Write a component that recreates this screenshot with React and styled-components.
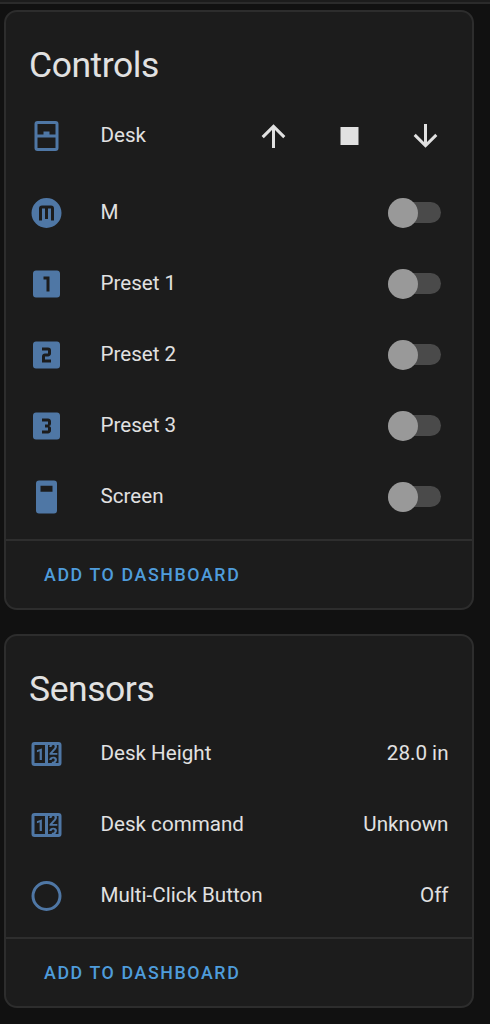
import React from 'react'
import styled, {createGlobalStyle, css} from 'styled-components'

const GlobalStyle = createGlobalStyle`
  * { box-sizing: border-box; }

  body {
    background-color: #111111;
    color: #e1e1e1;
    font-family: Roboto, sans-serif;
    margin: 0;
  }
`

const icons = {
  window: 'M6,11H10V9H14V11H18V4H6V11M18,13H6V20H18V13M6,22A2,2 0 0,1 4,20V4A2,2 0 0,1 6,2H18A2,2 0 0,1 20,4V20A2,2 0 0,1 18,22H6Z',
  circleM: 'M9,7A2,2 0 0,0 7,9V17H9V9H11V16H13V9H15V17H17V9A2,2 0 0,0 15,7H9M12,2A10,10 0 0,1 22,12A10,10 0 0,1 12,22A10,10 0 0,1 2,12A10,10 0 0,1 12,2Z',
  one: 'M14,17H12V9H10V7H14M19,3H5C3.89,3 3,3.89 3,5V19A2,2 0 0,0 5,21H19A2,2 0 0,0 21,19V5C21,3.89 20.1,3 19,3Z',
  two: 'M15,11C15,12.11 14.1,13 13,13H11V15H15V17H9V13C9,11.89 9.9,11 11,11H13V9H9V7H13A2,2 0 0,1 15,9M19,3H5C3.89,3 3,3.89 3,5V19A2,2 0 0,0 5,21H19A2,2 0 0,0 21,19V5C21,3.89 20.1,3 19,3Z',
  three: 'M15,10.5A1.5,1.5 0 0,1 13.5,12C14.34,12 15,12.67 15,13.5V15C15,16.11 14.11,17 13,17H9V15H13V13H11V11H13V9H9V7H13C14.11,7 15,7.89 15,9M19,3H5C3.89,3 3,3.89 3,5V19A2,2 0 0,0 5,21H19A2,2 0 0,0 21,19V5C21,3.89 20.1,3 19,3Z',
  screen: 'M7,1H17A2,2 0 0,1 19,3V21A2,2 0 0,1 17,23H7A2,2 0 0,1 5,21V3A2,2 0 0,1 7,1M8,4.5V8.5H16V4.5H8Z',
  counter: 'M4,4H20A2,2 0 0,1 22,6V18A2,2 0 0,1 20,20H4A2,2 0 0,1 2,18V6A2,2 0 0,1 4,4M4,6V18H11V6H4M20,18V6H18.76C19,6.54 18.95,7.07 18.95,7.13C18.88,7.8 18.41,8.5 18.24,8.75L15.91,11.3L19.23,11.28L19.24,12.5L14.04,12.47L14,11.47C14,11.47 17.05,8.24 17.2,7.95C17.34,7.67 17.91,6 16.5,6C15.27,6.05 15.41,7.3 15.41,7.3L13.87,7.31C13.87,7.31 13.88,6.65 14.25,6H13V18H15.58L15.57,17.14L16.54,17.13C16.54,17.13 17.45,16.97 17.46,16.08C17.5,15.08 16.65,15.08 16.5,15.08C16.37,15.08 15.43,15.13 15.43,15.95H13.91C13.91,15.95 13.95,13.89 16.5,13.89C19.1,13.89 18.96,15.91 18.96,15.91C18.96,15.91 19,17.16 17.85,17.63L18.37,18H20M8.92,16H7.42V10.2L5.62,10.76V9.53L8.76,8.41H8.92V16Z',
  circle: 'M12,20A8,8 0 0,1 4,12A8,8 0 0,1 12,4A8,8 0 0,1 20,12A8,8 0 0,1 12,20M12,2A10,10 0 0,0 2,12A10,10 0 0,0 12,22A10,10 0 0,0 22,12A10,10 0 0,0 12,2Z',
  up: 'M13,20H11V8L5.5,13.5L4.08,12.08L12,4.16L19.92,12.08L18.5,13.5L13,8V20Z',
  stop: 'M18,18H6V6H18V18Z',
  down: 'M11,4H13V16L18.5,10.5L19.92,11.92L12,19.84L4.08,11.92L5.5,10.5L11,16V4Z'
}

const Svg = styled.svg`
  display: block;
  fill: currentColor;
  flex: none;
  height: 36px;
  width: 37px;
`

const Icon = ({k}) => (
  <Svg viewBox='0 0 24 24'>
    <path fillRule='evenodd' d={icons[k]} />
  </Svg>
)

const Toolbar = styled.div`
  background-color: #1c1c1c;
  border-bottom: 2px solid #2b2b2b;
  height: 4px;
`

const Page = styled.main`
  display: flex;
  flex-direction: column;
  gap: 24px;
  height: 1020px;
  padding: 6px 16px 0 4px;
`

const Card = styled.section`
  background-color: #1c1c1c;
  border: 2px solid #2d2d2d;
  border-radius: 13px;
  display: flex;
  flex-direction: column;
`

const CardTitle = styled.h1`
  font-size: 35.5px;
  font-weight: 400;
  height: ${props => props.$height}px;
  letter-spacing: -0.45px;
  line-height: 46px;
  margin: 0;
  padding: 30px 23px 0;
`

const Row = styled.div`
  align-items: center;
  display: flex;
  height: 71px;
  padding: 0 23.5px 0 22px;

  ${props => props.$tall ? css`
    height: 81px;
    padding-bottom: 2px;
  ` : ''}
`

const RowIcon = styled.div`
  color: #4f77a5;
  margin-right: 35.5px;
`

const Label = styled.div`
  flex: 1;
  font-size: 20.6px;
  line-height: 30px;
  padding-bottom: 2px;
`

const Value = styled(Label)`
  flex: none;
`

const CoverButtons = styled.div`
  display: flex;
  gap: 39.25px;
  padding-right: 4.5px;
`

const CoverButton = styled.button`
  background: none;
  border: 0;
  color: inherit;
  padding: 0;
`

const SwitchTrack = styled.div`
  align-items: center;
  background-color: #4a4a4a;
  border-radius: 11px;
  display: flex;
  height: 21px;
  margin-right: 7.5px;
  width: 53px;
`

const SwitchThumb = styled.div`
  background-color: #999999;
  border-radius: 50%;
  height: 30px;
  width: 30px;
`

const CardActions = styled.div`
  align-items: center;
  border-top: 2px solid #2e2e2e;
  display: flex;
  height: 69px;
  margin-top: ${props => props.$gap}px;
  padding-left: 38px;
`

const ActionButton = styled.button`
  background: none;
  border: 0;
  color: #4f9cdb;
  font-family: inherit;
  font-size: 17.8px;
  font-weight: 500;
  letter-spacing: 1.6px;
  padding: 0;
  text-transform: uppercase;
`

const switches = [
  {icon: 'circleM', name: 'M'},
  {icon: 'one', name: 'Preset 1'},
  {icon: 'two', name: 'Preset 2'},
  {icon: 'three', name: 'Preset 3'},
  {icon: 'screen', name: 'Screen'}
]

const sensors = [
  {icon: 'counter', name: 'Desk Height', value: '28.0 in'},
  {icon: 'counter', name: 'Desk command', value: 'Unknown'},
  {icon: 'circle', name: 'Multi-Click Button', value: 'Off'}
]

const EntityRow = ({children, icon, name, tall}) => (
  <Row $tall={tall}>
    <RowIcon><Icon k={icon} /></RowIcon>
    <Label>{name}</Label>
    {children}
  </Row>
)

const EntityCard = ({children, gap, title, titleHeight}) => (
  <Card>
    <CardTitle $height={titleHeight}>{title}</CardTitle>
    {children}
    <CardActions $gap={gap}>
      <ActionButton>Add to dashboard</ActionButton>
    </CardActions>
  </Card>
)

export default function App () {
  return (
    <>
      <GlobalStyle />
      <Toolbar />
      <Page>
        <EntityCard gap={7} title='Controls' titleHeight={84}>
          <EntityRow icon='window' name='Desk' tall>
            <CoverButtons>
              {['up', 'stop', 'down'].map(k => (
                <CoverButton key={k} aria-label={k}><Icon k={k} /></CoverButton>
              ))}
            </CoverButtons>
          </EntityRow>
          {switches.map(({icon, name}) => (
            <EntityRow key={name} icon={icon} name={name}>
              <SwitchTrack><SwitchThumb /></SwitchTrack>
            </EntityRow>
          ))}
        </EntityCard>
        <EntityCard gap={6} title='Sensors' titleHeight={82}>
          {sensors.map(({icon, name, value}) => (
            <EntityRow key={name} icon={icon} name={name}>
              <Value>{value}</Value>
            </EntityRow>
          ))}
        </EntityCard>
      </Page>
    </>
  )
}
